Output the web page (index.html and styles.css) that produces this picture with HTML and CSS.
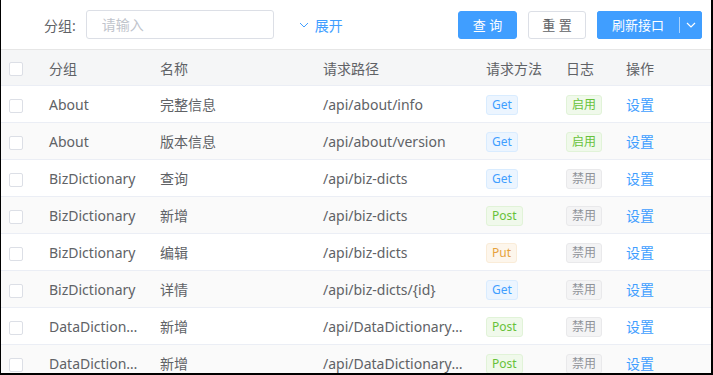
FILE: index.html
```html
<!DOCTYPE html>
<html lang="zh-CN">
<head>
<meta charset="UTF-8">
<meta name="viewport" content="width=device-width, initial-scale=1.0">
<title>接口列表</title>
<link rel="stylesheet" href="styles.css">
</head>
<body>

<div class="page">
  <div class="search-bar">
    <label class="search-label">分组:</label>
    <input type="text" class="search-input" placeholder="请输入" />
    <a class="expand-link">
      <svg width="10" height="6" viewBox="0 0 10 6"><path d="M1 1l4 4 4-4" fill="none" stroke="#409eff" stroke-width="1"/></svg>
      展开
    </a>
    <div class="search-actions">
      <button class="btn btn-primary btn-query">查 询</button>
      <button class="btn btn-default btn-reset">重 置</button>
      <div class="btn-split">
        <button class="btn btn-primary split-main">刷新接口</button>
        <span class="split-divider"></span>
        <button class="btn btn-primary split-arrow">
          <svg width="10" height="6" viewBox="0 0 10 6"><path d="M1 1l4 4 4-4" fill="none" stroke="#fff" stroke-width="1.2"/></svg>
        </button>
      </div>
    </div>
  </div>

  <table class="api-table">
    <colgroup>
      <col style="width:38px">
      <col style="width:111px">
      <col style="width:163px">
      <col style="width:163px">
      <col style="width:80px">
      <col style="width:60px">
      <col style="width:95px">
    </colgroup>
    <thead>
      <tr>
        <th class="col-check"><span class="checkbox"></span></th>
        <th>分组</th>
        <th>名称</th>
        <th>请求路径</th>
        <th>请求方法</th>
        <th>日志</th>
        <th>操作</th>
      </tr>
    </thead>
    <tbody>
      <tr>
        <td class="col-check"><span class="checkbox"></span></td>
        <td>About</td>
        <td>完整信息</td>
        <td>/api/about/info</td>
        <td><span class="tag tag-get">Get</span></td>
        <td><span class="tag tag-on">启用</span></td>
        <td><a class="link">设置</a></td>
      </tr>
      <tr>
        <td class="col-check"><span class="checkbox"></span></td>
        <td>About</td>
        <td>版本信息</td>
        <td>/api/about/version</td>
        <td><span class="tag tag-get">Get</span></td>
        <td><span class="tag tag-on">启用</span></td>
        <td><a class="link">设置</a></td>
      </tr>
      <tr>
        <td class="col-check"><span class="checkbox"></span></td>
        <td>BizDictionary</td>
        <td>查询</td>
        <td>/api/biz-dicts</td>
        <td><span class="tag tag-get">Get</span></td>
        <td><span class="tag tag-off">禁用</span></td>
        <td><a class="link">设置</a></td>
      </tr>
      <tr>
        <td class="col-check"><span class="checkbox"></span></td>
        <td>BizDictionary</td>
        <td>新增</td>
        <td>/api/biz-dicts</td>
        <td><span class="tag tag-post">Post</span></td>
        <td><span class="tag tag-off">禁用</span></td>
        <td><a class="link">设置</a></td>
      </tr>
      <tr>
        <td class="col-check"><span class="checkbox"></span></td>
        <td>BizDictionary</td>
        <td>编辑</td>
        <td>/api/biz-dicts</td>
        <td><span class="tag tag-put">Put</span></td>
        <td><span class="tag tag-off">禁用</span></td>
        <td><a class="link">设置</a></td>
      </tr>
      <tr>
        <td class="col-check"><span class="checkbox"></span></td>
        <td>BizDictionary</td>
        <td>详情</td>
        <td>/api/biz-dicts/{id}</td>
        <td><span class="tag tag-get">Get</span></td>
        <td><span class="tag tag-off">禁用</span></td>
        <td><a class="link">设置</a></td>
      </tr>
      <tr>
        <td class="col-check"><span class="checkbox"></span></td>
        <td>DataDictionary</td>
        <td>新增</td>
        <td>/api/DataDictionary/items</td>
        <td><span class="tag tag-post">Post</span></td>
        <td><span class="tag tag-off">禁用</span></td>
        <td><a class="link">设置</a></td>
      </tr>
      <tr>
        <td class="col-check"><span class="checkbox"></span></td>
        <td>DataDictionary</td>
        <td>新增</td>
        <td>/api/DataDictionary/types</td>
        <td><span class="tag tag-post">Post</span></td>
        <td><span class="tag tag-off">禁用</span></td>
        <td><a class="link">设置</a></td>
      </tr>
    </tbody>
  </table>
</div>

</body>
</html>
```

FILE: styles.css
```css
html, body {
  margin: 0;
  padding: 0;
  height: 100%;
  overflow: hidden;
}
body {
  font-family: "Noto Sans", "Noto Sans CJK SC", sans-serif;
  font-size: 14px;
  color: #606266;
  background-color: #fff;
}
.page {
  box-sizing: border-box;
  height: 375px;
  border-left: 1px solid #000;
  border-right: 2px solid #000;
  border-bottom: 2px solid #000;
  overflow: hidden;
}
.search-bar {
  display: flex;
  align-items: center;
  height: 49px;
  padding: 0 9px 0 43px;
  border-bottom: 1px solid #e6e6e6;
}
.search-label {
  color: #606266;
  margin-right: 10px;
}
.search-input {
  box-sizing: border-box;
  width: 188px;
  height: 29px;
  padding: 0 15px;
  border: 1px solid #dcdfe6;
  border-radius: 3px;
  font-family: inherit;
  font-size: 14px;
  color: #606266;
  outline: none;
}
.search-input::placeholder {
  color: #c0c4cc;
}
.expand-link {
  display: flex;
  align-items: center;
  gap: 6px;
  margin-left: 25px;
  color: #409eff;
  cursor: pointer;
}
.search-actions {
  display: flex;
  align-items: center;
  gap: 11px;
  margin-left: auto;
}
.btn {
  box-sizing: border-box;
  height: 28px;
  padding: 0;
  border-radius: 3px;
  font-family: inherit;
  font-size: 13px;
  cursor: pointer;
}
.btn-query {
  width: 59px;
}
.btn-reset {
  width: 58px;
}
.btn-primary {
  background-color: #409eff;
  border: 1px solid #409eff;
  color: #fff;
}
.btn-default {
  background-color: #fff;
  border: 1px solid #dcdfe6;
  color: #606266;
}
.btn-split {
  display: flex;
  align-items: center;
  height: 28px;
  background-color: #409eff;
  border-radius: 3px;
}
.split-main {
  width: 82px;
  border-radius: 3px 0 0 3px;
}
.split-divider {
  width: 1px;
  height: 16px;
  background-color: rgba(255, 255, 255, 0.55);
}
.split-arrow {
  display: flex;
  align-items: center;
  justify-content: center;
  width: 22px;
  border-radius: 0 3px 3px 0;
}
.api-table {
  width: 710px;
  border-collapse: collapse;
  table-layout: fixed;
}
.api-table th,
.api-table td {
  padding: 0 10px;
  text-align: left;
  font-weight: normal;
  white-space: nowrap;
  overflow: hidden;
  text-overflow: ellipsis;
  border-bottom: 1px solid #ebeef5;
}
.api-table th {
  height: 35px;
  background-color: #f5f6f7;
  color: #606266;
}
.api-table td {
  height: 36px;
}
.api-table tbody tr:nth-child(even) td {
  background-color: #fafafa;
}
.api-table .col-check {
  padding: 0 0 0 8px;
}
.checkbox {
  display: inline-block;
  box-sizing: border-box;
  width: 14px;
  height: 14px;
  border: 1px solid #dcdfe6;
  border-radius: 2px;
  background-color: #fff;
  vertical-align: middle;
}
.tag {
  display: inline-block;
  box-sizing: border-box;
  height: 20px;
  line-height: 18px;
  padding: 0 5px;
  border: 1px solid;
  border-radius: 3px;
  font-size: 12px;
  vertical-align: middle;
}
.tag-get {
  background-color: #ecf5ff;
  border-color: #d9ecff;
  color: #409eff;
}
.tag-post,
.tag-on {
  background-color: #f0f9eb;
  border-color: #e1f3d8;
  color: #67c23a;
}
.tag-put {
  background-color: #fdf6ec;
  border-color: #faecd8;
  color: #e6a23c;
}
.tag-off {
  background-color: #f4f4f5;
  border-color: #e9e9eb;
  color: #909399;
}
.link {
  color: #409eff;
  cursor: pointer;
}
```
